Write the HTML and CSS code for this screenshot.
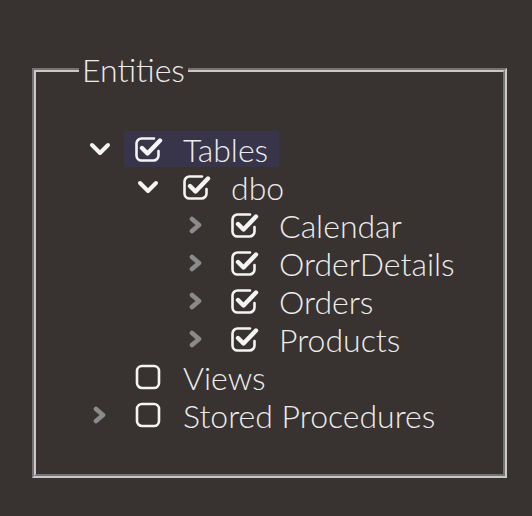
FILE: index.html
```html
<!doctype html>
<html>
<head>
	<meta charset="utf-8" />
	<title>Entities</title>
	<link rel="stylesheet" href="styles.css">
</head>
<body>
	<fieldset class="entities">
		<legend>Entities</legend>

		<ul class="tree">
			<li>
				<div class="row">
					<span class="toggle open"><svg viewBox="0 0 22 14"><path d="M3 3 L11 11 L19 3"/></svg></span>
					<span class="item selected">
						<svg class="check" viewBox="0 0 28 28"><path class="box" d="M19 3.5 H6.5 a5 5 0 0 0 -5 5 V20.5 a5 5 0 0 0 5 5 H18.5 a5 5 0 0 0 5 -5 V16"/><path class="tick" d="M7 13 L12.5 18.5 L25 5.5"/></svg>
						<span class="label">Tables</span>
					</span>
				</div>
				<ul>
					<li>
						<div class="row">
							<span class="toggle open"><svg viewBox="0 0 22 14"><path d="M3 3 L11 11 L19 3"/></svg></span>
							<span class="item">
								<svg class="check" viewBox="0 0 28 28"><path class="box" d="M19 3.5 H6.5 a5 5 0 0 0 -5 5 V20.5 a5 5 0 0 0 5 5 H18.5 a5 5 0 0 0 5 -5 V16"/><path class="tick" d="M7 13 L12.5 18.5 L25 5.5"/></svg>
								<span class="label">dbo</span>
							</span>
						</div>
						<ul>
							<li>
								<div class="row">
									<span class="toggle"><svg viewBox="0 0 16 18"><path d="M4 3 L11 9 L4 15"/></svg></span>
									<span class="item">
										<svg class="check" viewBox="0 0 28 28"><path class="box" d="M19 3.5 H6.5 a5 5 0 0 0 -5 5 V20.5 a5 5 0 0 0 5 5 H18.5 a5 5 0 0 0 5 -5 V16"/><path class="tick" d="M7 13 L12.5 18.5 L25 5.5"/></svg>
										<span class="label">Calendar</span>
									</span>
								</div>
							</li>
							<li>
								<div class="row">
									<span class="toggle"><svg viewBox="0 0 16 18"><path d="M4 3 L11 9 L4 15"/></svg></span>
									<span class="item">
										<svg class="check" viewBox="0 0 28 28"><path class="box" d="M19 3.5 H6.5 a5 5 0 0 0 -5 5 V20.5 a5 5 0 0 0 5 5 H18.5 a5 5 0 0 0 5 -5 V16"/><path class="tick" d="M7 13 L12.5 18.5 L25 5.5"/></svg>
										<span class="label">OrderDetails</span>
									</span>
								</div>
							</li>
							<li>
								<div class="row">
									<span class="toggle"><svg viewBox="0 0 16 18"><path d="M4 3 L11 9 L4 15"/></svg></span>
									<span class="item">
										<svg class="check" viewBox="0 0 28 28"><path class="box" d="M19 3.5 H6.5 a5 5 0 0 0 -5 5 V20.5 a5 5 0 0 0 5 5 H18.5 a5 5 0 0 0 5 -5 V16"/><path class="tick" d="M7 13 L12.5 18.5 L25 5.5"/></svg>
										<span class="label">Orders</span>
									</span>
								</div>
							</li>
							<li>
								<div class="row">
									<span class="toggle"><svg viewBox="0 0 16 18"><path d="M4 3 L11 9 L4 15"/></svg></span>
									<span class="item">
										<svg class="check" viewBox="0 0 28 28"><path class="box" d="M19 3.5 H6.5 a5 5 0 0 0 -5 5 V20.5 a5 5 0 0 0 5 5 H18.5 a5 5 0 0 0 5 -5 V16"/><path class="tick" d="M7 13 L12.5 18.5 L25 5.5"/></svg>
										<span class="label">Products</span>
									</span>
								</div>
							</li>
						</ul>
					</li>
				</ul>
			</li>
			<li>
				<div class="row">
					<span class="toggle"></span>
					<span class="item">
						<svg class="check" viewBox="0 0 28 28"><rect class="box" x="2" y="3" width="22" height="22" rx="5"/></svg>
						<span class="label">Views</span>
					</span>
				</div>
			</li>
			<li>
				<div class="row">
					<span class="toggle"><svg viewBox="0 0 16 18"><path d="M4 3 L11 9 L4 15"/></svg></span>
					<span class="item">
						<svg class="check" viewBox="0 0 28 28"><rect class="box" x="2" y="3" width="22" height="22" rx="5"/></svg>
						<span class="label">Stored Procedures</span>
					</span>
				</div>
			</li>
		</ul>
	</fieldset>
</body>
</html>
```

FILE: styles.css
```css
body {
	font-family: Lato, "Open Sans", sans-serif;
	font-weight: 300;
	color: #ececec;
	background-color: #383330;
	margin: 0;
	padding: 52px 25px 0 32px;
}

.entities {
	width: 475px;
	box-sizing: border-box;
	margin: 0;
	padding: 42px 0 40px 0;
	border: 4px groove #c8c8c8;
}

.entities legend {
	font-size: 32px;
	margin-left: 43px;
	padding: 0 3px;
	line-height: 36px;
}

.tree,
.tree ul {
	list-style: none;
	margin: 0;
	padding: 0;
}

.tree {
	padding-left: 50px;
}

.tree ul {
	padding-left: 48px;
}

.row {
	display: flex;
	align-items: center;
	height: 38px;
}

.toggle {
	width: 28px;
	height: 20px;
	display: flex;
	align-items: center;
	justify-content: center;
	margin-right: 10px;
}

.toggle svg {
	fill: none;
	stroke: #8a8a8a;
	stroke-width: 4.6;
	stroke-linecap: round;
	stroke-linejoin: round;
	width: 16px;
	height: 18px;
}

.toggle.open svg {
	stroke: #f4f4f4;
	stroke-width: 4;
	width: 22px;
	height: 14px;
}

.item {
	display: flex;
	align-items: center;
	height: 36px;
	padding: 0 11px;
}

.item.selected {
	background-color: #38344a;
}

.check {
	width: 28px;
	height: 28px;
	fill: none;
	stroke: #f4f4f4;
	stroke-linecap: round;
	stroke-linejoin: round;
}

.check .box {
	stroke-width: 2.6;
}

.check .tick {
	stroke-width: 4.4;
}

.label {
	font-size: 32px;
	margin-left: 20px;
}
```
